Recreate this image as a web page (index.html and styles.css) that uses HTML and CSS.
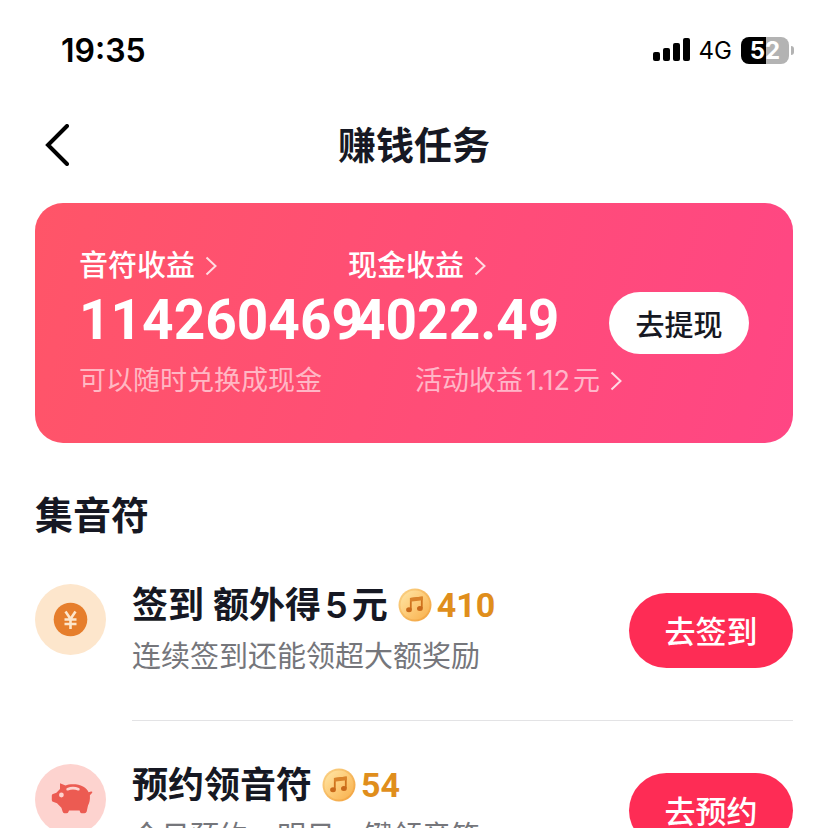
FILE: index.html
```html
<!DOCTYPE html>
<html lang="zh-CN">
<head>
<meta charset="utf-8">
<meta name="viewport" content="width=device-width, initial-scale=1">
<title>赚钱任务</title>
<link rel="stylesheet" href="styles.css">
</head>
<body>
<svg class="defs" width="0" height="0" aria-hidden="true">
  <defs>
    <linearGradient id="coin-fill" x1="0" y1="0" x2="1" y2="1">
      <stop offset="0" stop-color="#ffe6a6"/>
      <stop offset="0.5" stop-color="#fdcb78"/>
      <stop offset="1" stop-color="#f8b04c"/>
    </linearGradient>
    <linearGradient id="coin-rim" x1="0" y1="0" x2="1" y2="1">
      <stop offset="0" stop-color="#fbd489"/>
      <stop offset="1" stop-color="#f2a03a"/>
    </linearGradient>
    <symbol id="coin" viewBox="0 0 34 34">
      <circle cx="17" cy="17" r="16.5" fill="url(#coin-rim)"/>
      <circle cx="17" cy="17" r="14.5" fill="url(#coin-fill)"/>
      <path d="M12.8 21.5V10.8L23.8 9.4V20" fill="none" stroke="#cf731d" stroke-width="1.8"/>
      <path d="M12 10.1L24.7 8.5V12.2L12 13.8Z" fill="#d9822a"/>
      <ellipse cx="11" cy="21.8" rx="2.9" ry="2.5" fill="#c9691a"/>
      <ellipse cx="21.9" cy="20.4" rx="2.9" ry="2.5" fill="#c9691a"/>
    </symbol>
    <symbol id="chevron" viewBox="0 0 12 20">
      <path d="M1.5 1.5L10.5 10L1.5 18.5" fill="none" stroke="currentColor" stroke-width="2"/>
    </symbol>
  </defs>
</svg>

<div class="status">
  <span class="time">19:35</span>
  <div class="indicators">
    <svg class="signal" viewBox="0 0 37 24" aria-hidden="true">
      <rect x="0" y="14" width="7" height="9" rx="2"/>
      <rect x="10" y="10" width="7" height="13" rx="2"/>
      <rect x="20" y="5" width="7" height="18" rx="2"/>
      <rect x="30" y="0" width="7" height="23" rx="2"/>
    </svg>
    <span class="network">4G</span>
    <span class="battery">52</span>
  </div>
</div>

<header class="nav">
  <button class="back" type="button" aria-label="返回">
    <svg viewBox="0 0 24 42" aria-hidden="true"><path d="M22 2L3 21L22 40" fill="none" stroke="#000" stroke-width="4" stroke-linecap="round"/></svg>
  </button>
  <h1>赚钱任务</h1>
</header>

<main>
  <section class="card">
    <div class="earnings">
      <div class="balances">
        <div class="balance">
          <a class="label" href="#notes">音符收益<svg class="chevron"><use href="#chevron"/></svg></a>
          <strong class="amount">114260469</strong>
        </div>
        <div class="balance">
          <a class="label" href="#cash">现金收益<svg class="chevron"><use href="#chevron"/></svg></a>
          <strong class="amount">4022.49</strong>
        </div>
      </div>
      <div class="hints">
        <span>可以随时兑换成现金</span>
        <a href="#activity">活动收益<span class="num">1.12</span>元<svg class="chevron"><use href="#chevron"/></svg></a>
      </div>
    </div>
    <button class="withdraw" type="button">去提现</button>
  </section>

  <h2>集音符</h2>
  <ul class="tasks">
    <li class="task">
      <svg class="task-icon" viewBox="0 0 71 71" aria-hidden="true">
        <circle cx="35.5" cy="35.5" r="35.5" fill="#fde6cc"/>
        <circle cx="35.5" cy="35.5" r="16.8" fill="#e67e2c"/>
        <path d="M30.5 27.5L35.5 35L40.5 27.5M35.5 35V45M29.5 35.5H41.5M29.5 40H41.5" fill="none" stroke="#fde6cc" stroke-width="2.6"/>
      </svg>
      <div class="task-body">
        <div class="task-text">
          <h3>签到 额外得<span class="five">5</span>元<svg class="coin"><use href="#coin"/></svg><span class="reward">410</span></h3>
          <p>连续签到还能领超大额奖励</p>
        </div>
        <button class="go" type="button">去签到</button>
      </div>
    </li>
    <li class="task">
      <svg class="task-icon" viewBox="0 0 71 71" aria-hidden="true">
        <circle cx="35.5" cy="35.5" r="35.5" fill="#fdd3cf"/>
        <path d="M25 19.2L30.5 21.6C34 20 43 19.6 48 22.6C51 24.4 52.8 26.2 53.6 28.2L56 27.4Q57.8 27.2 57.2 28.8L54.9 31.2C55.2 36 54.4 39 53 41.5L51.7 47.5Q51.2 49.2 49.5 49.2H46.5Q45.2 49.2 45 47.8L44.6 46.6H34L33.4 48Q33 49.2 31.5 49.2H29.4Q28 49.2 27.6 47.6L26.4 43.8L22 39.2L18 37.8Q16.8 37.4 16.8 36V31.5Q16.8 30.4 18 30L21.4 28.8L25 25Z" fill="#ec5b52"/>
        <path d="M32.6 25.2Q38 23 43.4 25.2" fill="none" stroke="#fdd3cf" stroke-width="2.6" stroke-linecap="round"/>
        <circle cx="26.4" cy="31" r="2.4" fill="#fdd3cf"/>
      </svg>
      <div class="task-body">
        <div class="task-text">
          <h3>预约领音符<svg class="coin"><use href="#coin"/></svg><span class="reward">54</span></h3>
          <p>今日预约，明日一键领音符</p>
        </div>
        <button class="go" type="button">去预约</button>
      </div>
    </li>
  </ul>
</main>
</body>
</html>
```
FILE: styles.css
```css
* {
  box-sizing: border-box;
}

body {
  margin: 0;
  padding: 0 35px;
  background: #fff;
  color: #161823;
  font-family: Inter, "Noto Sans CJK SC", sans-serif;
}

h1, h2, h3, p, ul {
  margin: 0;
  padding: 0;
}

a {
  color: inherit;
  text-decoration: none;
}

button {
  border: 0;
  padding: 0;
  font: inherit;
  cursor: pointer;
}

.defs {
  position: absolute;
}

.status {
  display: flex;
  align-items: center;
  justify-content: space-between;
  height: 100px;
  padding: 0 4px 0 26px;
  color: #000;
}

.time {
  font-size: 32px;
  font-weight: 600;
}

.indicators {
  display: flex;
  align-items: center;
  gap: 9px;
}

.signal {
  width: 37px;
  height: 24px;
}

.network {
  font-size: 24px;
}

.battery {
  position: relative;
  width: 48px;
  height: 27px;
  border-radius: 8px;
  background: linear-gradient(90deg, #000 52%, #b3b3b3 52%);
  color: #fff;
  font-size: 24px;
  font-weight: 700;
  line-height: 27px;
  text-align: center;
}

.battery::after {
  content: "";
  position: absolute;
  left: 50px;
  top: 9px;
  width: 3px;
  height: 9px;
  border-radius: 0 4px 4px 0;
  background: #b3b3b3;
}

.nav {
  display: grid;
  grid-template-columns: 48px 1fr 48px;
  align-items: center;
  height: 90px;
}

.back {
  width: 48px;
  height: 48px;
  padding-left: 10px;
  background: none;
}

.back svg {
  display: block;
  width: 24px;
  height: 42px;
}

h1 {
  font-size: 38px;
  font-weight: 600;
  line-height: 48px;
  text-align: center;
}

.card {
  display: flex;
  align-items: center;
  justify-content: space-between;
  margin-top: 13px;
  padding: 42px 44px;
  border-radius: 28px;
  background: linear-gradient(105deg, #ff5568, #ff4684);
  color: #fff;
  white-space: nowrap;
}

.earnings {
  flex: 1;
  min-width: 0;
}

.balances {
  display: grid;
  grid-template-columns: 269px 1fr;
}

.balance {
  display: flex;
  flex-direction: column;
  min-width: 0;
}

.label {
  display: flex;
  align-items: center;
  gap: 10px;
  font-size: 29px;
  font-weight: 500;
  line-height: 42px;
}

.chevron {
  width: 12px;
  height: 20px;
  opacity: 0.8;
}

.amount {
  font-family: Roboto, sans-serif;
  font-size: 55px;
  font-weight: 700;
  line-height: 66px;
}

.balance + .balance .amount {
  padding-left: 6px;
}

.hints {
  display: flex;
  gap: 93px;
  padding-top: 8px;
  color: rgba(255, 255, 255, 0.6);
  font-size: 27px;
  line-height: 40px;
}

.hints a {
  display: flex;
  align-items: center;
}

.num {
  padding: 0 3px;
}

.hints .chevron {
  margin-left: 10px;
  color: #fff;
}

.withdraw {
  flex: none;
  width: 140px;
  height: 62px;
  border-radius: 31px;
  background: #fff;
  color: #161823;
  font-size: 29px;
  font-weight: 500;
}

h2 {
  margin-top: 47px;
  font-size: 38px;
  font-weight: 600;
  line-height: 50px;
}

.tasks {
  padding-top: 1px;
  list-style: none;
}

.task {
  display: flex;
  gap: 26px;
  padding-top: 43px;
}

.task-icon {
  flex: none;
  width: 71px;
  height: 71px;
}

.task-body {
  display: flex;
  flex: 1;
  align-items: flex-start;
  justify-content: space-between;
  padding-bottom: 43px;
  border-bottom: 1px solid #e3e3e5;
  white-space: nowrap;
}

h3 {
  display: flex;
  align-items: center;
  font-size: 36px;
  font-weight: 600;
  line-height: 42px;
}

.five {
  padding: 0 4px;
}

.coin {
  width: 34px;
  height: 34px;
  margin: 0 5px 0 10px;
}

.reward {
  color: #e08e1c;
  font-family: Roboto, sans-serif;
  font-size: 34px;
  font-weight: 700;
}

.task p {
  margin-top: 11px;
  color: #75767b;
  font-size: 29px;
  line-height: 40px;
}

.go {
  flex: none;
  width: 164px;
  height: 75px;
  margin-top: 9px;
  padding-bottom: 2px;
  border-radius: 38px;
  background: #fe2c55;
  color: #fff;
  font-size: 31px;
  font-weight: 500;
}
```
